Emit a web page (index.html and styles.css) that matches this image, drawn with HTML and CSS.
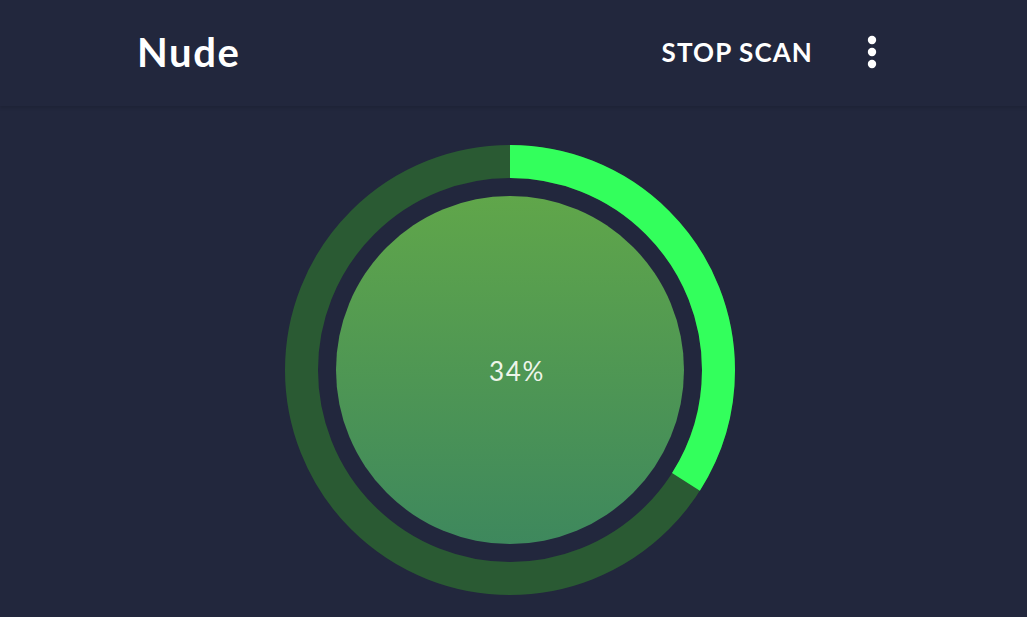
FILE: index.html
```html
<!DOCTYPE html>
<html lang="en">
<head>
    <meta charset="UTF-8">
    <title>Nude</title>
    <link rel="stylesheet" href="styles.css">
</head>
<body>

<div class="header">
    <h1 class="title">Nude</h1>
    <div class="actions">
        <button class="stop">STOP SCAN</button>
        <button class="more" aria-label="More options">
            <svg width="10" height="34" viewBox="0 0 10 34">
                <circle cx="5" cy="5" r="4.2" fill="#fff"/>
                <circle cx="5" cy="17" r="4.2" fill="#fff"/>
                <circle cx="5" cy="29" r="4.2" fill="#fff"/>
            </svg>
        </button>
    </div>
</div>

<!-- Scan progress -->
<div class="main">
    <div class="progress">
        <svg class="ring" width="452" height="452" viewBox="0 0 452 452">
            <circle cx="226" cy="226" r="208.5" fill="none" stroke="#2a5a33" stroke-width="33"/>
            <circle id="arc" cx="226" cy="226" r="208.5" fill="none" stroke="#33ff5c" stroke-width="33"
                    transform="rotate(-90 226 226)"/>
        </svg>
        <div class="inner">
            <span id="percent">34%</span>
        </div>
    </div>
</div>

<script>
// draw the progress arc from the value
var value = 34;
var arc = document.getElementById('arc');
var len = 2 * Math.PI * 208.5;
arc.setAttribute('stroke-dasharray', (len * value / 100) + ' ' + len);
document.getElementById('percent').textContent = value + '%';
</script>

</body>
</html>
```

FILE: styles.css
```css
body {
    margin: 0;
    background: #22273d;
    font-family: Lato, "Open Sans", sans-serif;
    color: #fff;
    height: 617px;
    overflow: hidden;
}
.header {
    height: 106px;
    display: flex;
    align-items: center;
    justify-content: space-between;
    padding: 0 150px 0 137px;
    box-shadow: 0 2px 3px rgba(0, 0, 0, 0.12);
    position: relative;
}
.title {
    margin: 0 0 2px 0;
    font-size: 40px;
    font-weight: 700;
    letter-spacing: 1.6px;
}
.actions {
    display: flex;
    align-items: center;
    gap: 54px;
}
button {
    background: none;
    border: none;
    color: #fff;
    padding: 0;
    cursor: pointer;
    font-family: inherit;
}
.stop {
    font-size: 26px;
    font-weight: 700;
    letter-spacing: 1.1px;
    margin-bottom: 3px;
}
.more {
    display: flex;
    margin-bottom: 3px;
}
.main {
    display: flex;
    justify-content: center;
    padding-top: 38px;
    padding-right: 7px;
}
.progress {
    position: relative;
    width: 452px;
    height: 452px;
}
.ring {
    display: block;
}
.inner {
    position: absolute;
    left: 52px;
    top: 52px;
    width: 348px;
    height: 348px;
    border-radius: 50%;
    background: linear-gradient(#60a64a, #3e885d);
    display: flex;
    align-items: center;
    justify-content: center;
}
#percent {
    font-size: 26px;
    font-weight: 400;
    letter-spacing: 1.7px;
    color: #eef5ea;
    margin: 2px 0 0 14px;
}
```
